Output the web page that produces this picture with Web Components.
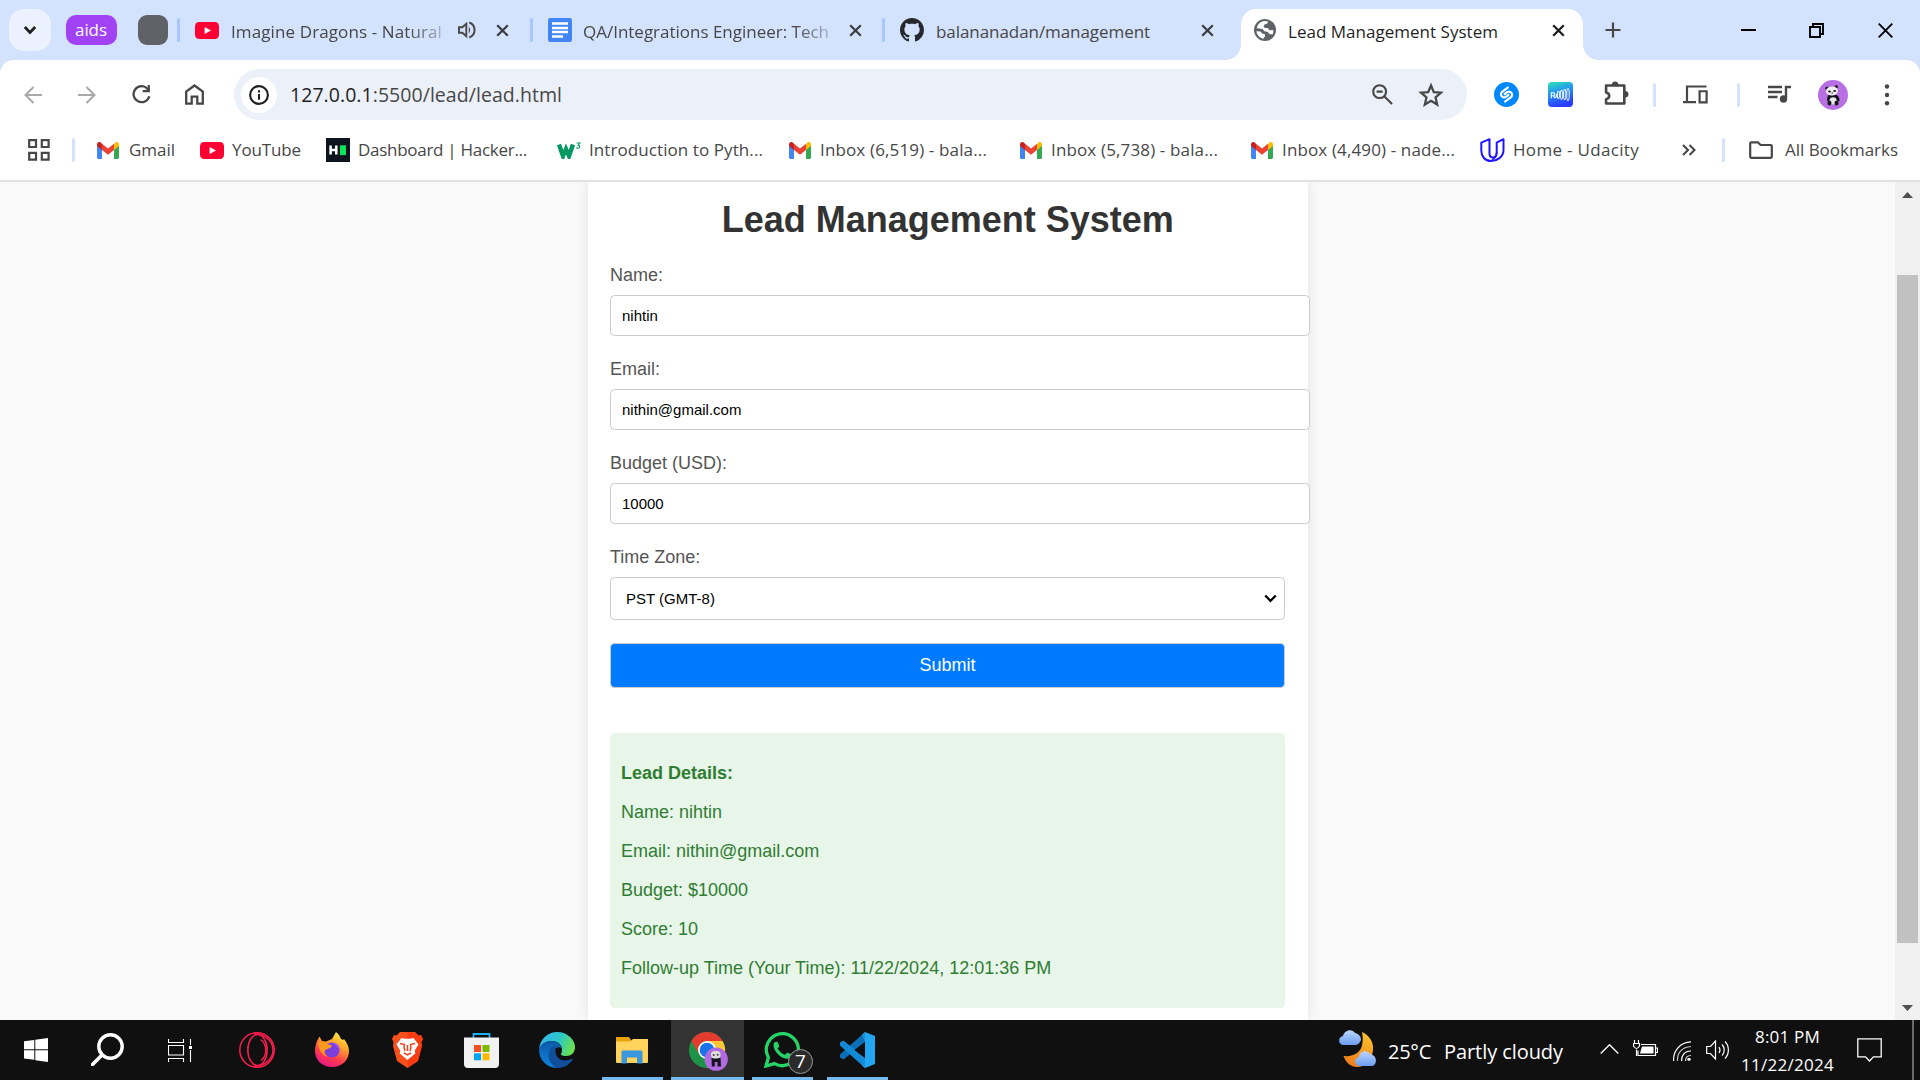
<!DOCTYPE html>
<html lang="en">
<head>
<meta charset="utf-8">
<title>Lead Management System</title>
<style>
html,body{margin:0;height:100%;overflow:hidden;background:#fff}
</style>
</head>
<body>
<desktop-screen></desktop-screen>
<script>
const ICONS = {
  chevron:['0 0 14 10','<path d="M1.8 2l5.2 5.5L12.2 2" fill="none" stroke="#1f1f1f" stroke-width="2.8"/>'],
  youtube:['0 0 24 16','<rect width="24" height="16" rx="4" fill="#f03"/><path d="M9.6 4.6l6.4 3.4-6.4 3.4z" fill="#fff"/>'],
  sound:['0 0 18 18','<path d="M1 6.3h3.300L8.300 2.800v12.400L4.300 11.700H1z" fill="none" stroke="#474747" stroke-width="1.900"/><path d="M10.800 5.500v7q2.700-3.500 0-7z" fill="#474747"/><path d="M11.300 1.500c7 2.600 7 12.400 0 15" fill="none" stroke="#474747" stroke-width="2"/>'],
  x:['0 0 13 13','<path d="M1.2 1.2l10.6 10.6M11.8 1.2L1.2 11.8" stroke="#3c3f43" stroke-width="2.3"/>'],
  xb:['0 0 13 13','<path d="M1.2 1.2l10.6 10.6M11.8 1.2L1.2 11.8" stroke="#1f1f1f" stroke-width="2.3"/>'],
  docs:['0 0 24 24','<rect width="24" height="24" rx="2.2" fill="#4285f4"/><path d="M4 5.500h16M4 10h16M4 14h16M4 18.500h11" stroke="#fff" stroke-width="2.3"/>'],
  github:['0 0 16 16','<path fill="#24292f" d="M8 0C3.58 0 0 3.58 0 8c0 3.54 2.29 6.53 5.47 7.59.4.07.55-.17.55-.38 0-.19-.01-.82-.01-1.49-2.01.37-2.53-.49-2.69-.94-.09-.23-.48-.94-.82-1.13-.28-.15-.68-.52-.01-.53.63-.01 1.08.58 1.23.82.72 1.21 1.87.87 2.33.66.07-.52.28-.87.51-1.07-1.78-.2-3.64-.89-3.64-3.95 0-.87.31-1.59.82-2.15-.08-.2-.36-1.02.08-2.12 0 0 .67-.21 2.2.82.64-.18 1.32-.27 2-.27s1.36.09 2 .27c1.53-1.04 2.2-.82 2.2-.82.44 1.1.16 1.92.08 2.12.51.56.82 1.27.82 2.15 0 3.07-1.87 3.75-3.65 3.95.29.25.54.73.54 1.48 0 1.07-.01 1.93-.01 2.2 0 .21.15.46.55.38A8.01 8.01 0 0016 8c0-4.42-3.58-8-8-8z"/>'],
  globe:['0 0 22 22','<circle cx="11" cy="11" r="11" fill="#5f6368"/><path d="M9 2.300c2-.4 4-.2 5.200.4L13 4.800l-2.500.7-1 2 1.500 1.500h3l1.200 2.200 3.800-.3c.8 1.500.3 3.300-.5 4.600-2.500 0-4-.8-4.500-2.500l-3.500-.7-2-2.300-3-.5-2.800-.3C3.500 5.500 6 3 9 2.300zM2.300 12.300l4.200.2 1.500 2 3 .7v2l-1.700 2.500C5.500 19 3 16 2.300 12.300z" fill="#fff"/>'],
  plus:['0 0 16 16','<path d="M8 .5v15M.5 8h15" stroke="#474747" stroke-width="2.2"/>'],
  min:['0 0 15 15','<path d="M0 7h15" stroke="#000" stroke-width="2"/>'],
  restore:['0 0 15 15','<path d="M1 4h10v10H1zM4 4V1h10v10h-3" fill="none" stroke="#000" stroke-width="1.9"/>'],
  close:['0 0 15 15','<path d="M.7.7l13.6 13.600M14.300.7L.7 14.300" stroke="#000" stroke-width="1.9"/>'],
  back:['0 0 18 18','<path d="M18 9H2M9.500 1L1.500 9l8 8" fill="none" stroke="#a8a8a8" stroke-width="2"/>'],
  fwd:['0 0 18 18','<path d="M0 9h16M8.500 1l8 8-8 8" fill="none" stroke="#a8a8a8" stroke-width="2"/>'],
  reload:['0 0 19 19','<path d="M17.300 11.200A8 8 0 1 1 15.700 4L17 5.500" fill="none" stroke="#474747" stroke-width="2.300"/><path d="M17.900 0v7.200h-7.200V5H15.700V0z" fill="#474747"/>'],
  home:['0 0 19 21','<path d="M1.200 19.600V7.700L9.500 1.500l8.300 6.200v11.900h-5.500v-7H6.700v7z" fill="none" stroke="#474747" stroke-width="2.300"/>'],
  info:['0 0 20 20','<circle cx="10" cy="10" r="8.900" fill="none" stroke="#1f1f1f" stroke-width="2.100"/><path d="M10 9v5.800M10 5.300v2.200" stroke="#1f1f1f" stroke-width="2.100"/>'],
  zoomout:['0 0 22 22','<circle cx="8" cy="8" r="6.700" fill="none" stroke="#474747" stroke-width="2.200"/><path d="M4.800 8h6.400M13 13l8 8" stroke="#474747" stroke-width="2.200"/>'],
  star:['0 0 24 24','<path d="M12 3.200l2.600 6.100 6.600.6-5 4.400 1.500 6.500L12 17.300l-5.700 3.500 1.500-6.500-5-4.400 6.600-.6z" fill="none" stroke="#474747" stroke-width="2.100"/>'],
  shazam:['0 0 24 24','<circle cx="12" cy="12" r="12" fill="#08f"/><path d="M13.200 5.300L8 9.200c-2 1.600-1.700 4.200.2 5.200 1.300.7 2.500.5 3.600-.4l2-1.600M10.800 18.700l5.200-3.900c2-1.600 1.700-4.200-.2-5.200-1.300-.7-2.500-.5-3.600.4l-2 1.600" fill="none" stroke="#fff" stroke-width="2.100" stroke-linecap="round"/>'],
  wave:['0 0 24 24','<defs><linearGradient id="g" x1="0" y1="0" x2=".3" y2="1"><stop offset="0" stop-color="#2ee6b0"/><stop offset=".45" stop-color="#2496f0"/><stop offset="1" stop-color="#2a3cff"/></linearGradient></defs><rect width="24" height="24" rx="3.500" fill="url(#g)"/><path d="M3.200 15.500v-5H5q1.500 0 1.500 1.300T5 13.200l1.500 1.800q1 .5 1.500-1.500l.5-2" fill="none" stroke="#e8f6ff" stroke-width="1.200"/><g fill="none" stroke="#e8f6ff" stroke-width="1"><ellipse cx="10" cy="12.300" rx="1.100" ry="3.500"/><ellipse cx="13" cy="12.200" rx="1.100" ry="4.300"/><ellipse cx="16" cy="12" rx="1.100" ry="5"/><ellipse cx="19.200" cy="12" rx="1.200" ry="5.800"/></g>'],
  puzzle:['0 0 24 25','<path d="M2 4.500h17.500v18H2v-4.300c4-.8 4-6 0-6.800z" fill="none" stroke="#474747" stroke-width="2.500" stroke-linejoin="round"/><path d="M7.500 4a3.200 3.500 0 0 1 6.400 0zM20 10a3.500 3.200 0 0 1 0 6.400z" fill="#474747"/>'],
  devices:['0 0 25 20','<path d="M23.500 1.500H4v15.500M0 18h13" fill="none" stroke="#474747" stroke-width="2.200"/><path d="M16.600 6.600h7v11.700h-7z" fill="none" stroke="#474747" stroke-width="2.200"/>'],
  music:['0 0 23 18','<path d="M0 2h14M0 7h14M0 12h9.500" stroke="#474747" stroke-width="2.300"/><path d="M23 2h-5v11" fill="none" stroke="#474747" stroke-width="2.400"/><circle cx="15.500" cy="14" r="3.700" fill="#474747"/>'],
  avatar:['0 0 30 30','<circle cx="15" cy="15" r="15" fill="#b76fe3"/><ellipse cx="14.800" cy="20.500" rx="4" ry="4" fill="#e8e4ea"/><path d="M10 15.500c2-1.200 7.500-1.200 9.500 0 1.500 1.500 2.200 3.500 2 5.500l-2 .3-1.700-3.300c-1.500-1-4-1-5.300 0l-1.800 3.500-1.500-.5c-.2-2 .2-4 .8-5.500z" fill="#15131a"/><circle cx="9" cy="8.300" r="1.700" fill="#222"/><circle cx="18.300" cy="6.700" r="1.700" fill="#222"/><ellipse cx="14" cy="11" rx="6" ry="4.500" transform="rotate(-6 14 11)" fill="#f1eff2"/><ellipse cx="11.500" cy="11.500" rx="1.500" ry="1.100" fill="#222"/><ellipse cx="16.700" cy="11" rx="1.500" ry="1.100" fill="#222"/><circle cx="14.200" cy="13" r=".7" fill="#222"/><ellipse cx="11.500" cy="23" rx="2" ry="2.500" fill="#15131a"/><ellipse cx="18.500" cy="23" rx="2" ry="2.500" fill="#15131a"/>'],
  dots:['0 0 6 22','<circle cx="3" cy="2.500" r="2.200" fill="#474747"/><circle cx="3" cy="11" r="2.200" fill="#474747"/><circle cx="3" cy="19.300" r="2.200" fill="#474747"/>'],
  apps:['0 0 22 22','<path d="M1.200 1.200h6.800v6.800H1.200zM13.800 1.200h6.800v6.800h-6.800zM1.200 13.800h6.800v6.800H1.200zM13.800 13.800h6.800v6.800h-6.800z" fill="none" stroke="#474747" stroke-width="2.200"/>'],
  gmail:['0 0 22 16.500','<path d="M0 3v12c0 .8.700 1.500 1.500 1.500H5V7z" fill="#4285f4"/><path d="M22 3v12c0 .8-.7 1.500-1.500 1.500H17V7z" fill="#34a853"/><path d="M17 2.500v5.300l5-3.800V2.300C22 .3 19.700-.7 18.200.5z" fill="#fbbc04"/><path d="M5 7.800V1.700l6 4.700 6-4.700v6.100l-6 4.500z" fill="#ea4335"/><path d="M0 2.300V4l5 3.800V1.700L3.800.5C2.300-.7 0 .3 0 2.300z" fill="#c5221f"/>'],
  hacker:['0 0 24 24','<path d="M0 0h24v24H0z" fill="#0e141e"/><path d="M4.600 7.500v9M10.300 7.500v9M4.600 12h5.700" stroke="#fff" stroke-width="2.500"/><path d="M14 7.300h6v9.800h-6z" fill="#05e65c"/>'],
  w3:['0 0 24 17','<path d="M2 2.500l4 11.500 3-7 3 7 4-11.500" fill="none" stroke="#059862" stroke-width="4.400"/><path d="M19.500 1h3.300l-1.600 2.200c2 0 2 3-.3 3-.8 0-1.300-.3-1.500-.8" fill="none" stroke="#059862" stroke-width="1.200"/>'],
  udacity:['0 0 25 24','<path d="M9.500 1.200L1.300 4.700v7.800C1.300 18.500 5 23 11 23s12.500-4 12.500-11V1.200l-6.800 3.500v9.800c0 3.500-1.500 5-3.700 5s-3.500-1.500-3.500-4z" fill="none" stroke="#2015ff" stroke-width="2" stroke-linejoin="round"/><path d="M16.700 14c0 3.500-1.700 6-5 8.500" fill="none" stroke="#2015ff" stroke-width="1.500"/>'],
  more:['0 0 14 12','<path d="M1 1l5 5-5 5M7.500 1l5 5-5 5" fill="none" stroke="#474747" stroke-width="2.100"/>'],
  folder:['0 0 24 18','<path d="M1.200 15.800V2.300q0-1 1-1H9l2.500 2.700h10.300q1 0 1 1v10.800q0 1-1 1H2.200q-1 0-1-1z" fill="none" stroke="#474747" stroke-width="2.200"/>'],
  selarrow:['0 0 13 9','<path d="M1.200 1.500l5.300 5.300 5.300-5.300" fill="none" stroke="#000" stroke-width="2.300"/>'],
  up:['0 0 11 6','<path d="M5.500 0L11 6H0z" fill="#505050"/>'],
  down:['0 0 11 6','<path d="M5.500 6L11 0H0z" fill="#505050"/>'],
  win:['0 0 24 24','<path d="M0 3.300L10.300 1.900v9.400H0zM11.300 1.700L24 0v11.300H11.300zM0 12.300h10.300v9.500L0 20.500zM11.300 12.300H24V24l-12.700-1.800z" fill="#fff"/>'],
  search:['0 0 33 33','<circle cx="19.500" cy="13.500" r="11.700" fill="none" stroke="#fff" stroke-width="3.400"/><path d="M11 22L1.500 31.500" stroke="#fff" stroke-width="3.600" stroke-linecap="round"/>'],
  task:['0 0 24 23','<path d="M.5 0v3.500h15V0M.5 6.500h15v9.500H.5zM.5 23v-3.500h15V23M22.500 0v6M22.500 11v12" fill="none" stroke="#fff" stroke-width="1.100"/><path d="M21 7h3v3h-3z" fill="#fff"/>'],
  opera:['0 0 36 36','<g fill="none" stroke="#fa1e4e" stroke-width="1.500"><circle cx="18" cy="18" r="17.200"/><ellipse cx="18.500" cy="18" rx="9.700" ry="15.500"/><path d="M15 1.500C30 3 34 12 34 18s-4 15-19 16.500"/><path d="M21.500 7.500c7 5 7 16 .5 21"/></g>'],
  firefox:['0 0 34 35','<defs><linearGradient id="f" x1=".8" y1="0" x2=".3" y2="1"><stop offset="0" stop-color="#fff44f"/><stop offset=".35" stop-color="#ffa52a"/><stop offset=".7" stop-color="#ff3b4e"/><stop offset="1" stop-color="#e31587"/></linearGradient></defs><path d="M2.500 8l2-3.500L7 9l4 .5L17 7 21 0c3 2 4 5 5 7l2 1 1-1c3 4 5 8 5 12 0 9-7 16-17 16S0 28 0 19c0-4 1-8 2.500-11z" fill="url(#f)"/><circle cx="17" cy="18" r="7.600" fill="#7b3fe0"/><path d="M3 11c4-2 7-2 9 1l5 1.500c-1 3-4 3-6 4-3 2-1 6 2 7-6 0-9-7-10-13.500z" fill="#ff9a1f"/><path d="M18 11c4-.5 7 3 6.500 7l-3-4z" fill="#a155f2"/>'],
  brave:['0 0 31 36','<path d="M8 0h15l3.500 3.500L29 3l2 4-1.500 3L30 14l-4 15-10.500 7L5 29 1 14l.5-4L0 7l2-4 2.500.5z" fill="#f7501c"/><path d="M15.500 36L26 29l4-15-.5-4L31 7l-2-4-2.500.500L23 0h-7.500z" fill="#ff2a0a" opacity=".55"/><path d="M9.500 6l3.500.8h5l3.500-.8 5 6.500-3.700 6 .5 3-4.300 3.500-3.500 3-3.500-3-4.300-3.500.5-3-3.700-6z" fill="#fff"/><path d="M8 11.500l4.500 1-.5 3 1 3.500M23 11.500l-4.500 1 .5 3-1 3.500M12 21l3.500 2 3.500-2M15.500 13v6" fill="none" stroke="#f7401c" stroke-width="1.500"/>'],
  store:['0 0 35 35','<path d="M9.500 5V1h16v4" fill="none" stroke="#1cb1f2" stroke-width="1.800"/><path d="M0 4.500h35V31q0 4-4 4H4q-4 0-4-4z" fill="#f1f1f1"/><path d="M10 12h7v7h-7z" fill="#f25022"/><path d="M18.500 12h7v7h-7z" fill="#7fba00"/><path d="M10 20.300h7v7h-7z" fill="#00a4ef"/><path d="M18.500 20.300h7v7h-7z" fill="#ffb900"/>'],
  edge:['0 0 36 36','<defs><linearGradient id="e" x1="0" y1=".2" x2="1" y2=".5"><stop offset="0" stop-color="#35b5ee"/><stop offset=".55" stop-color="#2cc7c7"/><stop offset="1" stop-color="#6be24e"/></linearGradient><linearGradient id="e2" x1="0" y1="0" x2="0" y2="1"><stop offset="0" stop-color="#0d5aa8"/><stop offset="1" stop-color="#0c86e0"/></linearGradient></defs><path d="M0 17C1 7 9 0 18 0c11 0 18 8 18 15 0 6-4 9-9 9-4 0-6-1-5-3 3-5-1-12-9-12C7 9 2 12 0 17z" fill="url(#e)"/><path d="M0 18C1 12 7 9 13 9c6 0 9 4 9 7-10-2-14 6-10 12 2 4 6 7 10 7.500C10 38 0 29 0 18z" fill="url(#e2)"/><path d="M14 14.500c-6 4-7 16 4 21.500 7 0 12-3 15.500-8 .3-1-.5-1.500-1.500-1-9 4-16-1-15.500-9 .2-1.500.5-2.500 1.500-3.800z" fill="#114f9b"/><path d="M19.500 15c-2.500 2-2.500 6.500.5 8.500 1 .8 2.500 1.200 4 1.200-3-1-2-2.500-1.500-4 .8-2-.5-5-3-5.700z" fill="#101010"/>'],
  explorer:['0 0 32 27','<path d="M0 0h13l2 3v3H0z" fill="#e8a30c"/><path d="M0 4.500h14L17 2h15v23q0 1-1 1H1q-1 0-1-1z" fill="#ffd35c"/><path d="M5.500 26.500V15q0-1.500 1.500-1.500h18q1.500 0 1.500 1.500v11.500h-5.500v-6H11v6z" fill="#3a96dd"/>'],
  chrome:['0 0 39 39','<circle cx="18" cy="18" r="18" fill="#1e9246"/><path d="M18 9h15.600A18 18 0 0 1 18 36l7.800-13.500z" fill="#fcc934"/><path d="M2.400 9A18 18 0 0 1 33.600 9H18a9 9 0 0 0-7.800 13.500z" fill="#e33b2e"/><circle cx="18" cy="18" r="9" fill="#fff"/><circle cx="18" cy="18" r="7.300" fill="#1a73e8"/><circle cx="27.200" cy="27.200" r="11.600" fill="#b06be0"/><path d="M22.500 26q4.500-2 9 0l.5 8.500h-3.500V30h-2.700v4.500h-3z" fill="#17141c"/><rect x="22" y="19" width="9.500" height="7.500" rx="3.500" fill="#dcdcdc"/><circle cx="24.700" cy="23" r="1" fill="#444"/><circle cx="28.700" cy="22.700" r="1" fill="#444"/>'],
  whatsapp:['0 0 36 36','<path d="M2 34l2.400-8.500A16 16 0 1 1 10.500 31.600z" fill="none" stroke="#25d366" stroke-width="3.300"/><path d="M9.500 13c0-2 1.500-3.700 3.200-3.200 1.500 0 2 3 2.500 4 .5 1.500-2 2-1.500 3 2 3 4 5 7 6 1 .3 1.800-2.500 3-2 1 .4 4 1.500 4 2.300 0 2.500-3 4-5 3.700C16 26 9.500 19 9.500 13z" fill="#25d366"/>'],
  vscode:['0 0 36 36','<path d="M26 0v10L4.500 27.500 1 25.500v-3z" fill="#0b6fb8"/><path d="M1 10.500l3.500-2L26 26v10L1 13.500z" fill="#1389d6"/><path d="M26 0l10 4v28l-10 4V0z" fill="#23a6f2"/><path d="M26 10L15.500 18 26 26z" fill="#101010"/><path d="M26 0l-3 2.500 3 8zM26 36l-3-2.500 3-8z" fill="#1b8fd8"/>'],
  weather:['0 0 37 39','<defs><linearGradient id="m" x1=".7" y1="0" x2=".3" y2="1"><stop offset="0" stop-color="#fbc12d"/><stop offset="1" stop-color="#f07a1a"/></linearGradient><linearGradient id="c" x1="0" y1="0" x2="0" y2="1"><stop offset="0" stop-color="#bcd5ff"/><stop offset="1" stop-color="#6c9ef0"/></linearGradient></defs><path d="M23 3c7 3 12 10 11 18-1 11-8 17-16 17-6 0-11-4-13.500-11C14 28 23 24 23.500 13 24 9 23.500 6 23 3z" fill="url(#m)"/><path d="M5 16c-6 0-6.500-8-1-9C5 1 13-1 16 4c5 1 7.500 6 5 9-1 2-3 3-5 3z" fill="url(#c)"/><path d="M21 37c-6 0-6.500-8-1-9 0-6 8-8 11-3 6 1 7 7 5 10-1 1.500-2 2-4 2z" fill="url(#c)"/>'],
  tchev:['0 0 19 10','<path d="M.7 9.500l8.800-8.800 8.800 8.800" fill="none" stroke="#fff" stroke-width="1.300"/>'],
  battery:['0 0 25 17','<path d="M8 4.500h14.500v11H5v-5M23 8h1.500v4.500H23M3.500 9.500V16" fill="none" stroke="#fff" stroke-width="1.200"/><path d="M9 6.500h11.500v7H7z" fill="#fff"/><path d="M1.500 0v3M5.500 0v3M.5 3.500h6v2.500q-3 5-6 0z" fill="#101010" stroke="#fff" stroke-width="1.200"/>'],
  wifi:['0 0 18 22','<g fill="none" stroke="#fff" stroke-width="1.200"><path d="M.6 22C0 11 7 1.500 18 1"/><path d="M4.500 22C4 13 9 6.500 18 6" opacity=".75"/><path d="M8.500 22c0-6 3-11 9.500-11"/><path d="M12.500 22c0-4 2-6 5.500-6" opacity=".8"/></g><circle cx="16" cy="20" r="1.700" fill="#fff"/>'],
  volume:['0 0 23 20','<path d="M.7 6.500h3.800L9.500 1v18l-5-5.500H.7z" fill="none" stroke="#fff" stroke-width="1.200"/><path d="M13 7q2 3 0 6M16 4.500c3 3 3 8 0 11M19 1.500c4.500 4.500 4.500 12.500 0 17" fill="none" stroke="#fff" stroke-width="1.200"/>'],
  note:['0 0 25 24','<path d="M.8.8h23.400v18h-7.700L12.500 23l-4-4.200H.8z" fill="none" stroke="#fff" stroke-width="1.300"/>']
};

function define(tag, css, html){
  const t = document.createElement('template');
  t.innerHTML = `<style>${css}</style>${html}`;
  customElements.define(tag, class extends HTMLElement{
    constructor(){ super(); this.attachShadow({mode:'open'}).append(t.content.cloneNode(true)); }
  });
}

/* Inline SVG icon: <ui-icon name w h> */
customElements.define('ui-icon', class extends HTMLElement{
  connectedCallback(){
    if(this.shadowRoot) return;
    const [vb, body] = ICONS[this.getAttribute('name')], w = this.getAttribute('w'), h = this.getAttribute('h') || w;
    this.attachShadow({mode:'open'}).innerHTML =
      `<style>:host{display:block;flex:none;width:${w}px;height:${h}px}svg{display:block}</style>
       <svg width="${w}" height="${h}" viewBox="${vb}" preserveAspectRatio="none" aria-hidden="true">${body}</svg>`;
  }
});

/* One-line label tracked to a fixed width: <fit-text w fade> */
customElements.define('fit-text', class extends HTMLElement{
  connectedCallback(){
    if(this.shadowRoot) return;
    const w = +this.getAttribute('w');
    this.attachShadow({mode:'open'}).innerHTML =
      `<style>:host{display:block;flex:none;width:${w}px;white-space:nowrap}
       :host([fade]){-webkit-mask-image:linear-gradient(90deg,#000 calc(100% - 34px),rgba(0,0,0,.3));mask-image:linear-gradient(90deg,#000 calc(100% - 34px),rgba(0,0,0,.3))}
       span{display:inline-block}</style><span><slot></slot></span>`;
    const s = this.shadowRoot.querySelector('span');
    s.style.letterSpacing = ((w - s.getBoundingClientRect().width) / this.textContent.length).toFixed(3) + 'px';
  }
});

define('ui-sep', ':host{display:block;flex:none;width:3px;height:24px;border-radius:2px;background:var(--sep,#d3e3fd)}', '');

/* Horizontal strip; each child carries its own leading space in --g */
define('h-row', `:host{display:flex;align-items:center;box-sizing:border-box;flex:none}::slotted(*){margin-left:var(--g)}`, '<slot></slot>');

define('active-tab', `:host{display:flex;align-items:center;box-sizing:border-box;flex:none;width:342px;height:51px;align-self:flex-end;background:#fff;border-radius:15px 15px 0 0;position:relative;padding-bottom:9px;color:#1f1f1f}
  ::slotted(*){margin-left:var(--g)}
  :host::before,:host::after{content:"";position:absolute;bottom:0;width:15px;height:15px}
  :host::before{left:-15px;background:radial-gradient(circle at 0 0,transparent 14.500px,#fff 15px)}
  :host::after{right:-15px;background:radial-gradient(circle at 100% 0,transparent 14.500px,#fff 15px)}`, '<slot></slot>');

define('tab-strip', `:host{display:block;height:60px;background:#d3e2fd;--sep:#a8c7fa;color:#474747;font-size:17px;line-height:24px}
  h-row{height:60px}
  .btn{flex:none;width:42px;height:42px;border-radius:15px;background:#ebf1fe;display:flex;align-items:center;justify-content:center}
  .grp{flex:none;width:51px;height:30px;border-radius:10px;background:#a142f4;color:#fff;line-height:29px;box-sizing:border-box;padding-left:9px}
  .gray{flex:none;width:30px;height:30px;border-radius:9px;background:#5f6368}
  .t{margin-top:3px}`,
 `<h-row>
  <div class="btn" style="--g:9px"><ui-icon name="chevron" w="14" h="10"></ui-icon></div>
  <div class="grp" style="--g:15px"><fit-text w="32">aids</fit-text></div>
  <div class="gray" style="--g:21px"></div>
  <ui-sep style="--g:9px"></ui-sep>
  <ui-icon style="--g:15px" name="youtube" w="24" h="17"></ui-icon>
  <fit-text class="t" style="--g:12px" w="211" fade>Imagine Dragons - Natural</fit-text>
  <ui-icon style="--g:16px" name="sound" w="18"></ui-icon>
  <ui-icon style="--g:20px" name="x" w="13"></ui-icon>
  <ui-sep style="--g:21px"></ui-sep>
  <ui-icon style="--g:15px" name="docs" w="24"></ui-icon>
  <fit-text class="t" style="--g:11px" w="246" fade>QA/Integrations Engineer: Tech</fit-text>
  <ui-icon style="--g:20px" name="x" w="13"></ui-icon>
  <ui-sep style="--g:20px"></ui-sep>
  <ui-icon style="--g:15px" name="github" w="24"></ui-icon>
  <fit-text class="t" style="--g:12px" w="214">balananadan/management</fit-text>
  <ui-icon style="--g:51px" name="x" w="13"></ui-icon>
  <active-tab style="--g:27px">
    <ui-icon style="--g:13px" name="globe" w="22"></ui-icon>
    <fit-text class="t" style="--g:12px" w="210">Lead Management System</fit-text>
    <ui-icon style="--g:54px" name="xb" w="13"></ui-icon>
  </active-tab>
  <ui-icon style="--g:22px" name="plus" w="16"></ui-icon>
  <ui-icon style="--g:120px" name="min" w="15"></ui-icon>
  <ui-icon style="--g:53px" name="restore" w="15"></ui-icon>
  <ui-icon style="--g:54px" name="close" w="15"></ui-icon>
 </h-row>`);

define('tool-bar', `:host{display:block;height:60px;background:#d3e2fd}
  h-row{height:60px}
  .bar{background:#fff;border-radius:14px 14px 0 0;padding-top:9px}
  .omni{width:1233px;height:51px;border-radius:26px;background:#ecf0f9;color:#474747;font-size:19.500px;line-height:28px}
  .site{flex:none;width:36px;height:36px;border-radius:50%;background:#fff;display:flex;align-items:center;justify-content:center}
  b{font-weight:400;color:#1f1f1f}`,
 `<h-row class="bar">
  <ui-icon style="--g:24px" name="back" w="18"></ui-icon>
  <ui-icon style="--g:36px" name="fwd" w="18"></ui-icon>
  <ui-icon style="--g:36px" name="reload" w="19"></ui-icon>
  <ui-icon style="--g:34px" name="home" w="19" h="21"></ui-icon>
  <h-row class="omni" style="--g:30px">
    <div class="site" style="--g:7px"><ui-icon name="info" w="20"></ui-icon></div>
    <fit-text style="--g:13px" w="272"><b>127.0.0.1</b>:5500/lead/lead.html</fit-text>
    <ui-icon style="--g:810px" name="zoomout" w="21"></ui-icon>
    <ui-icon style="--g:25px" name="star" w="26"></ui-icon>
  </h-row>
  <ui-icon style="--g:27px" name="shazam" w="25"></ui-icon>
  <ui-icon style="--g:29px" name="wave" w="25"></ui-icon>
  <ui-icon style="--g:31px;margin-bottom:3px" name="puzzle" w="25" h="25"></ui-icon>
  <ui-sep style="--g:24px"></ui-sep>
  <ui-icon style="--g:27px" name="devices" w="25" h="19"></ui-icon>
  <ui-sep style="--g:29px"></ui-sep>
  <ui-icon style="--g:28px;margin-bottom:2px" name="music" w="23" h="18"></ui-icon>
  <ui-icon style="--g:27px" name="avatar" w="30"></ui-icon>
  <ui-icon style="--g:36px" name="dots" w="6" h="22"></ui-icon>
 </h-row>`);

define('bookmark-bar', `:host{display:block;height:62px;background:#fff;border-bottom:2px solid #e1e1e1;box-sizing:border-box;color:#474747;font-size:17px;line-height:24px}
  h-row{height:60px}`,
 `<h-row>
  <ui-icon style="--g:28px" name="apps" w="22"></ui-icon>
  <ui-sep style="--g:22px"></ui-sep>
  <ui-icon style="--g:22px" name="gmail" w="22" h="17"></ui-icon><fit-text style="--g:10px" w="46">Gmail</fit-text>
  <ui-icon style="--g:25px" name="youtube" w="24" h="17"></ui-icon><fit-text style="--g:8px" w="69">YouTube</fit-text>
  <ui-icon style="--g:25px" name="hacker" w="24"></ui-icon><fit-text style="--g:8px" w="169">Dashboard | Hacker...</fit-text>
  <ui-icon style="--g:30px" name="w3" w="24" h="17"></ui-icon><fit-text style="--g:8px" w="174">Introduction to Pyth...</fit-text>
  <ui-icon style="--g:26px" name="gmail" w="22" h="17"></ui-icon><fit-text style="--g:9px" w="167">Inbox (6,519) - bala...</fit-text>
  <ui-icon style="--g:33px" name="gmail" w="22" h="17"></ui-icon><fit-text style="--g:9px" w="167">Inbox (5,738) - bala...</fit-text>
  <ui-icon style="--g:33px" name="gmail" w="22" h="17"></ui-icon><fit-text style="--g:9px" w="173">Inbox (4,490) - nade...</fit-text>
  <ui-icon style="--g:25px" name="udacity" w="25" h="24"></ui-icon><fit-text style="--g:8px" w="126">Home - Udacity</fit-text>
  <ui-icon style="--g:43px" name="more" w="14" h="12"></ui-icon>
  <ui-sep style="--g:26px"></ui-sep>
  <ui-icon style="--g:24px" name="folder" w="24" h="18"></ui-icon><fit-text style="--g:12px" w="113">All Bookmarks</fit-text>
 </h-row>`);

define('form-field', `:host{display:block;margin-bottom:23px}
  .l{font-size:18px;line-height:21px;color:#555;margin-bottom:9px}
  .box{box-sizing:border-box;width:700px;height:41px;border:1px solid #ccc;border-radius:4.500px;background:#fff;padding:0 11px;font-size:15px;line-height:39px;color:#000}
  :host([select]) .box{width:675px;height:43px;padding:0 7px 0 15px;line-height:41px;display:flex;align-items:center;justify-content:space-between}
  ui-icon{display:none}:host([select]) ui-icon{display:block}`,
 `<div class="l"><slot name="label"></slot></div><div class="box"><slot></slot><ui-icon name="selarrow" w="13" h="9"></ui-icon></div>`);

define('lead-details', `:host{display:block;box-sizing:border-box;width:675px;height:275px;background:#e8f5e9;border-radius:4.500px;padding:30px 11px 0;color:#2e7d32;font-size:18px;line-height:21px}
  ::slotted(p){margin:0 0 18px}`, '<slot></slot>');

define('lead-form', `:host{display:block;box-sizing:border-box;width:720px;height:838px;margin-left:588px;background:#fff;box-shadow:0 0 11px rgba(0,0,0,.1);padding:17px 22px 0;font-family:"Liberation Sans",Arial,sans-serif}
  h1{margin:0 0 25px;text-align:center;font-size:36px;line-height:41px;color:#333;width:675.500px}
  .submit{box-sizing:border-box;width:675px;height:45px;margin:0 0 45px;border:1px solid #ccc;border-radius:4.500px;background:#007bff;color:#fff;font-size:18px;line-height:42px;text-align:center}`,
 `<h1>Lead Management System</h1>
  <form-field><span slot="label">Name:</span>nihtin</form-field>
  <form-field><span slot="label">Email:</span>nithin@gmail.com</form-field>
  <form-field><span slot="label">Budget (USD):</span>10000</form-field>
  <form-field select><span slot="label">Time Zone:</span>PST (GMT-8)</form-field>
  <div class="submit">Submit</div>
  <lead-details><p><strong>Lead Details:</strong></p><p>Name: nihtin</p><p>Email: nithin@gmail.com</p><p>Budget: $10000</p><p>Score: 10</p><p>Follow-up Time (Your Time): 11/22/2024, 12:01:36 PM</p></lead-details>`);

define('scroll-bar', `:host{display:flex;flex-direction:column;align-items:center;box-sizing:border-box;flex:none;width:25px;height:838px;background:#f0f0f0;padding:10px 0 9px}
  .thumb{width:21px;height:668px;margin:77px 0 auto;background:#c1c1c1}`,
 `<ui-icon name="up" w="11" h="6"></ui-icon><div class="thumb"></div><ui-icon name="down" w="11" h="6"></ui-icon>`);

define('page-view', `:host{display:flex;justify-content:space-between;height:838px;background:#f9f9f9;overflow:hidden}`, '<lead-form></lead-form><scroll-bar></scroll-bar>');

/* Taskbar button; "open" adds the running underline */
define('task-app', `:host{display:flex;flex:none;height:60px;align-items:center;justify-content:center;box-sizing:border-box;position:relative}
  :host([open]){border-bottom:3px solid #76b9ed;padding-top:3px}:host([active]){background:#333}
  ::slotted(.badge){position:absolute;left:36px;top:29px;width:23px;height:23px;border:1px solid #999;border-radius:50%;background:#2b2b2b;color:#fff;font-size:19px;line-height:22px;text-align:center}`, '<slot></slot>');

define('task-bar', `:host{display:block;height:60px;background:#101010;color:#fff;font-size:20px;line-height:28px}
  h-row{height:60px}
  .clock{flex:none;width:93px;font-size:17px;line-height:28px;display:flex;flex-direction:column;align-items:center}
  .edge{flex:none;width:2px;height:60px;background:#6b6b6b}`,
 `<h-row>
  <ui-icon style="--g:24px" name="win" w="24"></ui-icon>
  <ui-icon style="--g:43px;margin-bottom:1px" name="search" w="33"></ui-icon>
  <ui-icon style="--g:44px" name="task" w="24" h="23"></ui-icon>
  <ui-icon style="--g:47px" name="opera" w="36"></ui-icon>
  <ui-icon style="--g:40px;margin-bottom:2px" name="firefox" w="34" h="35"></ui-icon>
  <ui-icon style="--g:43px" name="brave" w="31" h="36"></ui-icon>
  <ui-icon style="--g:41px" name="store" w="35" h="35"></ui-icon>
  <ui-icon style="--g:40px" name="edge" w="36"></ui-icon>
  <task-app open style="--g:27px;width:61px"><ui-icon name="explorer" w="32" h="27" style="margin-right:1px"></ui-icon></task-app>
  <task-app open active style="--g:8px;width:73px"><ui-icon name="chrome" w="39" style="margin-left:2px;margin-top:3px"></ui-icon></task-app>
  <task-app open style="--g:8px;width:61px"><ui-icon name="whatsapp" w="36" style="margin-right:1px"></ui-icon><span class="badge">7</span></task-app>
  <task-app open style="--g:14px;width:61px"><ui-icon name="vscode" w="36" style="margin-right:1px"></ui-icon></task-app>
  <ui-icon style="--g:451px;margin-bottom:3px" name="weather" w="37" h="39"></ui-icon>
  <fit-text style="--g:12px;margin-top:3px" w="43">25°C</fit-text>
  <fit-text style="--g:13px;margin-top:3px" w="119">Partly cloudy</fit-text>
  <ui-icon style="--g:37px;margin-bottom:2px" name="tchev" w="19" h="10"></ui-icon>
  <ui-icon style="--g:14px;margin-bottom:3px" name="battery" w="25" h="17"></ui-icon>
  <ui-icon style="--g:15px;margin-top:2px" name="wifi" w="18" h="20"></ui-icon>
  <ui-icon style="--g:15px" name="volume" w="23" h="20"></ui-icon>
  <div class="clock" style="--g:12px;margin-top:2px"><fit-text w="65">8:01 PM</fit-text><fit-text w="93">11/22/2024</fit-text></div>
  <ui-icon style="--g:23px" name="note" w="25" h="24"></ui-icon>
  <div class="edge" style="--g:30px"></div>
 </h-row>`);

define('desktop-screen', `:host{display:flex;flex-direction:column;width:1920px;height:1080px;overflow:hidden;font-family:"Open Sans","Noto Sans",sans-serif}
  :host>*{flex:none}`,
 `<tab-strip></tab-strip><tool-bar></tool-bar><bookmark-bar></bookmark-bar><page-view></page-view><task-bar></task-bar>`);
</script>
</body>
</html>
